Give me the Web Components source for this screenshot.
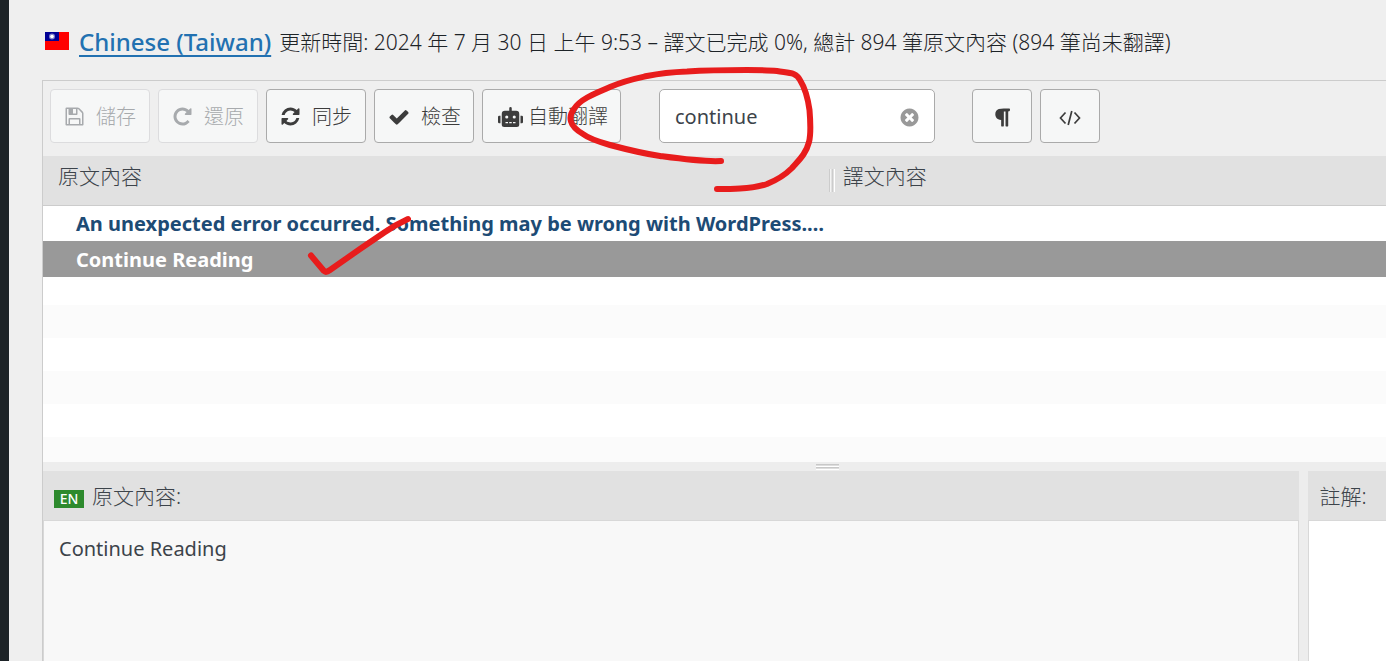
<!DOCTYPE html>
<html lang="zh-Hant">
<head>
<meta charset="utf-8">
<title>Chinese (Taiwan)</title>
<style>
html, body { margin: 0; height: 100%; }
body { font: 20px/28px "Noto Sans", "Noto Sans CJK TC", sans-serif; color: #3c434a; background: #efefef; overflow: hidden; }
</style>
</head>
<body>
<admin-page>
  <locale-heading slot="heading" name="Chinese (Taiwan)">更新時間: 2024 年 7 月 30 日 上午 9:53 – 譯文已完成 0%, 總計 894 筆原文內容 (894 筆尚未翻譯)</locale-heading>
  <editor-toolbar>
    <tool-button icon="save" disabled>儲存</tool-button>
    <tool-button icon="revert" disabled>還原</tool-button>
    <tool-button icon="sync">同步</tool-button>
    <tool-button icon="check">檢查</tool-button>
    <tool-button icon="robot" wide>自動翻譯</tool-button>
    <filter-field value="continue"></filter-field>
    <tool-button icon="pilcrow" square label="Toggle invisibles"></tool-button>
    <tool-button icon="code" square label="Toggle code view"></tool-button>
  </editor-toolbar>
  <string-list></string-list>
  <split-panes>
    <text-pane slot="source" badge="EN" heading="原文內容:" readonly>Continue Reading</text-pane>
    <text-pane slot="notes" heading="註解:"></text-pane>
  </split-panes>
</admin-page>
<pen-marks></pen-marks>

<script>
const ICONS = {
  save: ['0 0 1792 1792', 21, 21, '<path d="M512 1536h768v-384h-768v384zm896 0h128v-896q0-14-10-38.5t-20-34.5l-281-281q-10-10-34-20t-39-10v416q0 40-28 68t-68 28h-576q-40 0-68-28t-28-68v-416h-128v1280h128v-416q0-40 28-68t68-28h832q40 0 68 28t28 68v416zm-384-928v-320q0-13-9.5-22.5t-22.5-9.5h-192q-13 0-22.5 9.5t-9.5 22.5v320q0 13 9.5 22.5t22.5 9.5h192q13 0 22.5-9.5t9.5-22.5zm640 32v928q0 40-28 68t-68 28h-1344q-40 0-68-28t-28-68v-1344q0-40 28-68t68-28h928q40 0 88 20t76 48l280 280q28 28 48 76t20 88z"/>'],
  revert: ['0 0 1792 1792', 21, 21, '<path d="M1664 256v448q0 26-19 45t-45 19h-448q-42 0-59-40-17-39 14-69l138-138q-148-137-349-137-104 0-198.5 40.5t-163.5 109.5-109.5 163.5-40.5 198.5 40.5 198.5 109.5 163.5 163.5 109.5 198.5 40.5q119 0 225-52t179-147q7-10 23-12 15 0 25 9l137 138q9 8 9.5 20.5t-7.5 22.5q-109 132-264 204.5t-327 72.5q-156 0-298-61t-245-164-164-245-61-298 61-298 164-245 245-164 298-61q147 0 284.5 55.5t244.5 156.5l130-129q29-31 70-14 39 17 39 59z"/>'],
  sync: ['0 0 1792 1792', 21, 21, '<path d="M1639 1056q0 5-1 7-64 268-268 434.5t-478 166.5q-146 0-282.5-55t-243.5-157l-129 129q-19 19-45 19t-45-19-19-45v-448q0-26 19-45t45-19h448q26 0 45 19t19 45-19 45l-137 137q71 66 161 102t187 36q134 0 250-65t186-179q11-17 53-117 8-23 30-23h192q13 0 22.5 9.5t9.5 22.5zm25-800v448q0 26-19 45t-45 19h-448q-26 0-45-19t-19-45 19-45l138-138q-148-137-349-137-134 0-250 65t-186 179q-11 17-53 117-8 23-30 23h-199q-13 0-22.5-9.5t-9.5-22.5v-7q65-268 270-434.5t480-166.5q146 0 284 55.5t245 156.5l130-129q19-19 45-19t45 19 19 45z"/>'],
  check: ['0 0 1792 1792', 22, 22, '<path d="M1671 566q0 40-28 68l-724 724-136 136q-28 28-68 28t-68-28l-136-136-362-362q-28-28-28-68t28-68l136-136q28-28 68-28t68 28l294 295 656-657q28-28 68-28t68 28l136 136q28 28 28 68z"/>'],
  robot: ['0 0 640 512', 25, 20, '<path d="M32 224H64V416H32A32 32 0 0 1 0 384V256A32 32 0 0 1 32 224Zm512-48V448a64 64 0 0 1-64 64H160a64 64 0 0 1-64-64V176a80 80 0 0 1 80-80H288V32a32 32 0 0 1 64 0V96H464A80 80 0 0 1 544 176ZM264 256a40 40 0 1 0-40 40A40 40 0 0 0 264 256Zm-8 128H192v32h64Zm96 0H288v32h64ZM456 256a40 40 0 1 0-40 40A40 40 0 0 0 456 256Zm-8 128H384v32h64ZM640 256V384a32 32 0 0 1-32 32H576V224h32A32 32 0 0 1 640 256Z"/>'],
  clear: ['0 0 1792 1792', 21, 21, '<path d="M1277 1122q0-26-19-45l-181-181 181-181q19-19 19-45 0-27-19-46l-90-90q-19-19-46-19-26 0-45 19l-181 181-181-181q-19-19-45-19-27 0-46 19l-90 90q-19 19-19 46 0 26 19 45l181 181-181 181q-19 19-19 45 0 27 19 46l90 90q19 19 46 19 26 0 45-19l181-181 181 181q19 19 45 19 27 0 46-19l90-90q19-19 19-46zm387-226q0 209-103 385.5t-279.5 279.5-385.5 103-385.5-103-279.5-279.5-103-385.5 103-385.5 279.5-279.5 385.5-103 385.5 103 279.5 279.5 103 385.5z"/>'],
  pilcrow: ['0 0 1792 1792', 21, 21, '<path d="M1534 189v73q0 29-18.5 61t-42.5 32q-50 0-54 1-26 6-32 31-3 11-3 64v1152q0 25-18 43t-43 18h-108q-25 0-43-18t-18-43v-1218h-143v1218q0 25-17.5 43t-43.5 18h-108q-26 0-43.5-18t-17.5-43v-496q-147-12-245-59-126-58-192-179-64-117-64-259 0-166 88-286 88-118 209-159 111-37 417-37h479q25 0 43 18t18 43z"/>'],
  code: ['0 0 22 20', 22, 20, '<path d="M6.5 5.500L1.500 11l5 5.500M15.500 5.500l5 5.500-5 5.500M12.800 4L9.200 18" fill="none" stroke="currentColor" stroke-width="1.700"/>']
};
const icon = name => {
  const [box, w, h, body] = ICONS[name];
  return `<svg viewBox="${box}" width="${w}" height="${h}" fill="currentColor" aria-hidden="true">${body}</svg>`;
};
const define = (tag, render) => customElements.define(tag, class extends HTMLElement {
  connectedCallback() {
    if (!this.shadowRoot) this.attachShadow({ mode: 'open' }).innerHTML = render(this);
  }
});

define('admin-page', () => `
  <style>
    :host { display: flex; min-height: 100vh; }
    nav { flex: 0 0 9px; background: #1d2327; }
    main { flex: 1; min-width: 0; display: flex; flex-direction: column; padding-left: 33px; }
    header { padding: 28px 3px; height: 24px; }
    section { flex: 1; display: flex; flex-direction: column; border: solid #ccc; border-width: 1px 0 0 1px; }
  </style>
  <nav></nav>
  <main><header><slot name="heading"></slot></header><section><slot></slot></section></main>`);

define('locale-heading', el => `
  <style>
    :host { display: flex; align-items: center; height: 28px; color: #1d2327; white-space: nowrap; font-size: 21px; font-weight: 300; }
    svg { flex: none; margin: -2px 10px 0 0; }
    a { font-size: 24px; font-weight: 500; color: #2271b1; text-decoration-thickness: 2px; text-underline-offset: 4px; margin-right: 8px; }
  </style>
  <svg width="24" height="18" viewBox="0 0 24 18"><path fill="#f00" d="M0 0h24v18H0z"/><path fill="#000095" d="M0 0h14v9H0z"/><circle cx="7" cy="4.500" r="3" fill="#8080ca"/><circle cx="7" cy="4.500" r="1.800" fill="#fff"/></svg>
  <a href="#">${el.getAttribute('name')}</a><span><slot></slot></span>`);

define('editor-toolbar', () => `
  <style>
    :host { display: flex; gap: 8px; padding: 8px 7px 13px; }
    ::slotted(filter-field) { margin: 0 29px 0 30px; }
  </style><slot></slot>`);

define('tool-button', el => `
  <style>
    :host { display: block; flex: 0 0 100px; min-width: 0; }
    :host([wide]) { flex-basis: 139px; }
    :host([square]) { flex-basis: 60px; }
    button { box-sizing: border-box; width: 100%; height: 54px; display: flex; align-items: center; gap: 11px; padding: 1px 12px 0 13px; border: 1px solid #aaa; border-radius: 4px; background: #f6f7f7; color: #3c3c3c; font: inherit; font-weight: 300; white-space: nowrap; }
    :host([wide]) button { gap: 5px; padding-left: 15px; }
    :host([square]) button { justify-content: center; padding: 2px 0 0; }
    button:disabled { color: #a7aaad; border-color: #dcdcde; }
    svg { flex: none; }
  </style>
  <button type="button" ${el.hasAttribute('disabled') ? 'disabled' : ''} ${el.hasAttribute('label') ? `aria-label="${el.getAttribute('label')}"` : ''}>${icon(el.getAttribute('icon'))}${el.hasAttribute('square') ? '' : '<slot></slot>'}</button>`);

define('filter-field', el => `
  <style>
    :host { box-sizing: border-box; flex: 0 0 276px; min-width: 0; height: 54px; display: flex; align-items: center; padding: 2px 14px 0 15px; border: 1px solid #aaa; border-radius: 5px; background: #fff; }
    input { flex: 1; width: 0; min-width: 0; padding: 0; border: 0; outline: 0; background: none; font: inherit; color: #3c434a; }
    button { display: flex; padding: 0; border: 0; background: none; color: #999; }
  </style>
  <input type="text" aria-label="Filter" value="${el.getAttribute('value')}"><button type="button" aria-label="Clear">${icon('clear')}</button>`);

define('string-list', () => `
  <style>
    :host { display: block; height: 306px; background: repeating-linear-gradient(#fff 0 33px, #fbfbfb 33px 66px) 0 50px no-repeat; overflow: hidden; }
    table { width: 100%; border-collapse: separate; border-spacing: 0; table-layout: fixed; }
    th, td { padding: 0; text-align: left; white-space: nowrap; }
    th { box-sizing: border-box; height: 50px; padding: 0 15px 9px; background: #e1e1e1; border-bottom: 1px solid #ccc; font-size: 21px; font-weight: 300; }
    th:first-child { width: 58.5%; }
    th + th { padding-left: 0; }
    .head { display: flex; align-items: center; gap: 8px; }
    .grip { box-sizing: border-box; width: 6px; height: 23px; margin-top: 8px; border: solid #fff; border-width: 0 1px; border-left-color: #ccc; background: linear-gradient(90deg, #f4f4f4 1px, #e1e1e1 1px 2px, #ccc 2px 3px, #e1e1e1 3px); }
    td { box-sizing: border-box; height: 35px; padding-top: 1px; background: #fff; color: #1d4b75; font-weight: 700; }
    td:first-child { padding-left: 33px; overflow: hidden; text-overflow: ellipsis; }
    .on td { height: 36px; background: #999; color: #fff; }
  </style>
  <table>
    <thead><tr><th>原文內容</th><th><div class="head"><span class="grip"></span>譯文內容</div></th></tr></thead>
    <tbody>
      <tr><td>An unexpected error occurred. Something may be wrong with WordPress.…</td><td></td></tr>
      <tr class="on"><td>Continue Reading</td><td></td></tr>
    </tbody>
  </table>`);

define('split-panes', () => `
  <style>
    :host { flex: 1; display: flex; flex-direction: column; background: #ededed; }
    .bar { height: 9px; display: flex; justify-content: center; align-items: center; }
    .bar span { width: 23px; height: 6px; margin: 1px 0 0 226px; background: linear-gradient(#c8c8c8 1px, #ddd 1px 2px, #fff 2px 3px, #c8c8c8 3px 4px, #ddd 4px 5px, #fff 5px); }
    .grid { flex: 1; display: grid; grid-template-columns: 16fr 1fr; gap: 9px; margin-right: -1px; }
  </style>
  <div class="bar"><span></span></div>
  <div class="grid"><slot name="source"></slot><slot name="notes"></slot></div>`);

define('text-pane', el => `
  <style>
    :host { display: flex; flex-direction: column; min-width: 0; }
    header { box-sizing: border-box; height: 49px; display: flex; align-items: center; gap: 8px; padding: 0 11px; background: #e1e1e1; font-size: 21px; font-weight: 300; white-space: nowrap; }
    b { background: #2d8a2d; color: #fff; font: 500 14px/18px "Noto Sans", sans-serif; padding: 0 5px; margin-top: 6px; min-width: 20px; text-align: center; }
    div { flex: 1; padding: 14px 15px; border: 1px solid #d8d8d8; border-bottom: 0; background: #fff; }
    :host([readonly]) div { background: #f8f8f8; }
  </style>
  <header>${el.hasAttribute('badge') ? `<b>${el.getAttribute('badge')}</b>` : ''}<span>${el.getAttribute('heading')}</span></header>
  <div><slot></slot></div>`);

define('pen-marks', () => `
  <style>
    :host { position: absolute; top: 0; left: 0; pointer-events: none; }
    svg { display: block; }
  </style>
  <svg width="830" height="290" fill="none" stroke="#e81c1c" stroke-width="6" stroke-linecap="round" stroke-linejoin="round" aria-hidden="true">
    <path d="M721 161C703 162 682 159 660 156C640 153 625 149 610 145C596 141 588 138 583 134C569 126 568 117 574 109C580 99 596 93 610 87C626 80 638 78 647 76C662 73 675 72 687 71.500C710 70 730 70 747 70C760 70 768 70 777 71C789 73 796 72 800 80C805 88 808 99 809.500 110C810.500 122 811 134 809 142C806 154 799 160 792 168C785 175 777 180 767 184C758 187 750 188 740 188.500C732 189 724 189 717 189"/>
    <path d="M311 255.500L324 271Q326 273 330 270L360 249L385 232Q395 225 408 219"/>
  </svg>`);
</script>
</body>
</html>
